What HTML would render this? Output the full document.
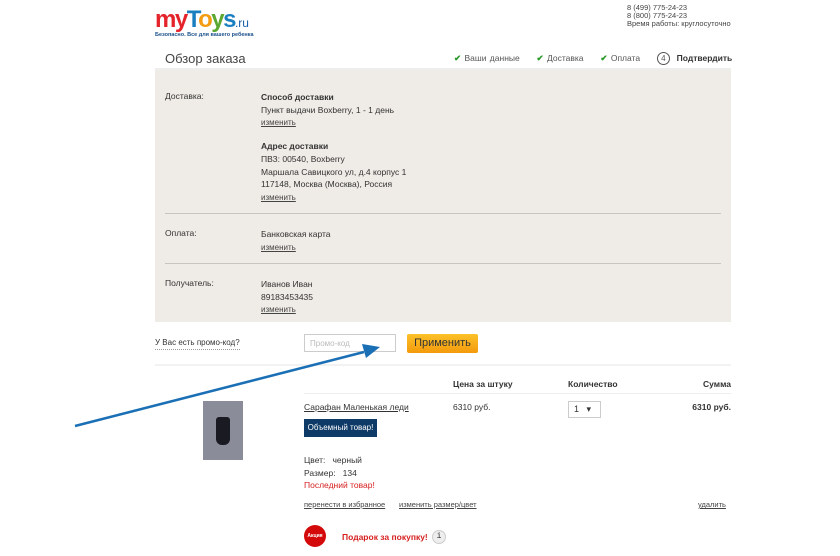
<!DOCTYPE html><html><head><meta charset="utf-8"><style>
*{margin:0;padding:0}body{width:840px;height:556px;background:#fff;font-family:"Liberation Sans",sans-serif;color:#333;position:relative;overflow:hidden;font-size:8.5px}
.a{position:absolute;white-space:nowrap}
.l{color:#444;text-decoration:underline;font-size:8px}
</style></head><body>
<div class="a" style="left:155px;top:6px;font:bold 24px 'Liberation Sans';letter-spacing:-1.5px"><span style="color:#e4232b">my</span><span style="color:#1a7fc1">T</span><span style="color:#f39c12">o</span><span style="color:#5aa832">y</span><span style="color:#1a7fc1">s</span><span style="font-size:12px;color:#1a5ea8;font-weight:normal;letter-spacing:0">.ru</span></div>
<div class="a" style="left:155px;top:32px;font-size:5.5px;color:#1a4f8a;font-weight:bold">Безопасно. Все для вашего ребенка</div>
<div class="a" style="left:627px;top:4px;font-size:7.5px;line-height:8px;color:#444">8 (499) 775-24-23<br>8 (800) 775-24-23<br>Время работы: круглосуточно</div>
<div class="a" style="left:165px;top:51px;font-size:13px;color:#444">Обзор заказа</div>
<div class="a" style="left:454px;top:52px;font-size:8.5px;color:#555;word-spacing:1px"><span style="color:#2a9a2a;font-weight:bold">✔</span> Ваши данные &nbsp;&nbsp;&nbsp;&nbsp;<span style="color:#2a9a2a;font-weight:bold">✔</span> Доставка &nbsp;&nbsp;&nbsp;&nbsp;<span style="color:#2a9a2a;font-weight:bold">✔</span> Оплата &nbsp;&nbsp;&nbsp;&nbsp;<span style="display:inline-block;width:11px;height:11px;border:1px solid #555;border-radius:50%;text-align:center;line-height:11px;font-size:8px">4</span>&nbsp; <b style="color:#333">Подтвердить</b></div>
<div class="a" style="left:155px;top:68px;width:576px;height:2px;background:#eee"></div>
<div class="a" style="left:155px;top:70px;width:576px;height:252px;background:#efebe6"></div>
<div class="a" style="left:165px;top:91px">Доставка:</div>
<div class="a" style="left:261px;top:91px;line-height:12.5px"><b>Способ доставки</b><br>Пункт выдачи Boxberry, 1 - 1 день<br><span class="l">изменить</span></div>
<div class="a" style="left:261px;top:140px;line-height:12.8px"><b>Адрес доставки</b><br>ПВЗ: 00540, Boxberry<br>Маршала Савицкого ул, д.4 корпус 1<br>117148, Москва (Москва), Россия<br><span class="l">изменить</span></div>
<div class="a" style="left:165px;top:213px;width:556px;height:1px;background:#c9c4bd"></div>
<div class="a" style="left:165px;top:228px">Оплата:</div>
<div class="a" style="left:261px;top:228px;line-height:12.5px">Банковская карта<br><span class="l">изменить</span></div>
<div class="a" style="left:165px;top:263px;width:556px;height:1px;background:#c9c4bd"></div>
<div class="a" style="left:165px;top:278px">Получатель:</div>
<div class="a" style="left:261px;top:278px;line-height:12.5px">Иванов Иван<br>89183453435<br><span class="l">изменить</span></div>
<div class="a" style="left:155px;top:338px;font-size:8px;border-bottom:1px dotted #999;padding-bottom:2px">У Вас есть промо-код?</div>
<div class="a" style="left:304px;top:334px;width:92px;height:18px;border:1px solid #ccc;font-size:8px;color:#bbb;line-height:18px;padding-left:5px;box-sizing:border-box">Промо-код</div>
<div class="a" style="left:407px;top:334px;width:71px;height:19px;background:linear-gradient(#fcc12a,#f39a0c);border-radius:2px;font-size:11px;color:#333;text-align:center;line-height:19px">Применить</div>
<div class="a" style="left:155px;top:364px;width:576px;height:2px;background:#f2f2f2"></div>
<div class="a" style="left:453px;top:379px;font-weight:bold">Цена за штуку</div>
<div class="a" style="left:568px;top:379px;font-weight:bold">Количество</div>
<div class="a" style="right:109px;top:379px;font-weight:bold">Сумма</div>
<div class="a" style="left:304px;top:393px;width:427px;height:1px;background:#eee"></div>
<div class="a" style="left:203px;top:401px;width:40px;height:59px;background:#8a8d99"><div style="position:absolute;left:13px;top:16px;width:14px;height:28px;background:#1a1a22;border-radius:3px 3px 6px 6px"></div></div>
<div class="a" style="left:304px;top:402px;font-size:8.5px;text-decoration:underline">Сарафан Маленькая леди</div>
<div class="a" style="left:453px;top:402px">6310 руб.</div>
<div class="a" style="left:568px;top:401px;width:33px;height:17px;border:1px solid #ccc;box-sizing:border-box;font-size:9px;line-height:15px;padding-left:5px">1 &nbsp;&nbsp;▾</div>
<div class="a" style="right:109px;top:402px;font-weight:bold">6310 руб.</div>
<div class="a" style="left:304px;top:419px;width:73px;height:18px;background:#0d3a66;color:#fff;font-size:8px;line-height:18px;text-align:center">Объемный товар!</div>
<div class="a" style="left:304px;top:454px;line-height:12.5px">Цвет: &nbsp; черный<br>Размер: &nbsp; 134<br><span style="color:#d62020">Последний товар!</span></div>
<div class="a l" style="left:304px;top:500px;font-size:7.5px">перенести в избранное</div>
<div class="a l" style="left:399px;top:500px;font-size:7.5px">изменить размер/цвет</div>
<div class="a l" style="left:698px;top:500px;font-size:7.5px">удалить</div>
<div class="a" style="left:304px;top:525px;width:22px;height:22px;border-radius:50%;background:#d40a0a;color:#fff;font-size:5px;font-weight:bold;text-align:center;line-height:22px">Акция</div>
<div class="a" style="left:342px;top:532px;color:#d62020;font-weight:bold">Подарок за покупку!</div>
<div class="a" style="left:432px;top:530px;width:12px;height:12px;border-radius:50%;background:#eee;border:1px solid #ccc;font-size:8px;text-align:center;line-height:12px;font-family:'Liberation Mono'">i</div>
<svg class="a" style="left:0;top:0" width="840" height="556"><line x1="75" y1="426" x2="364" y2="352" stroke="#1a6fb5" stroke-width="2.5"/><polygon points="380,347 362,344 366,358" fill="#1a6fb5"/></svg>
</body></html>
